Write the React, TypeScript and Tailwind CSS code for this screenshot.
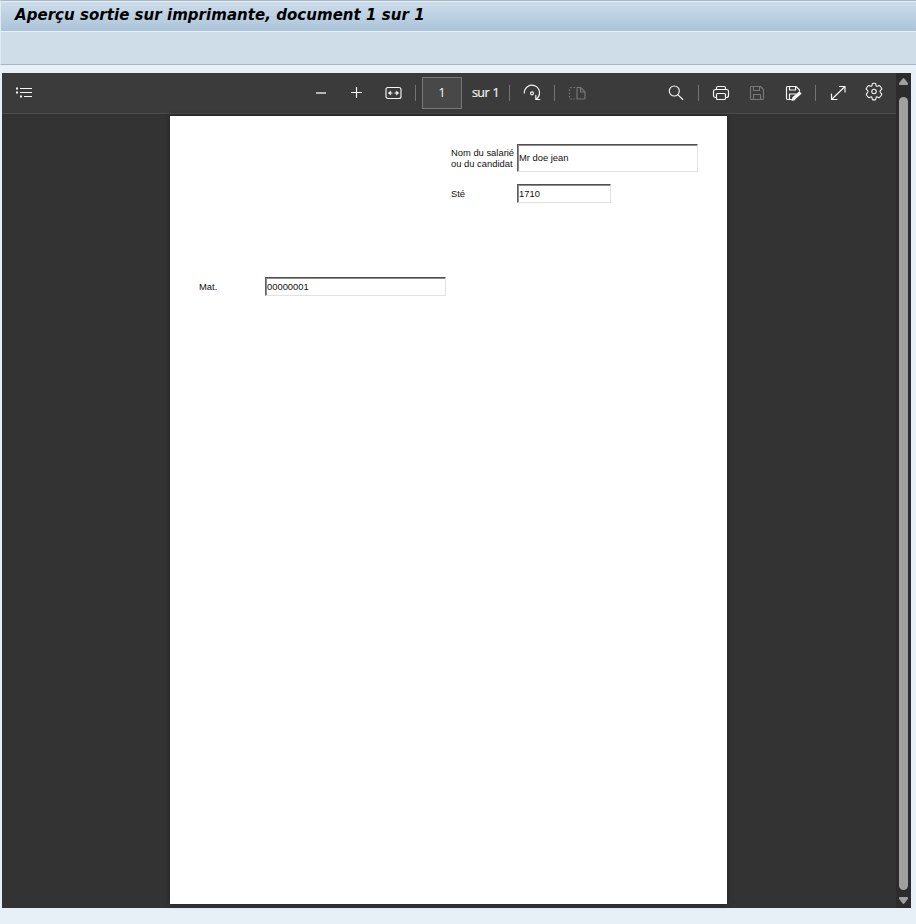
import type { ReactNode } from "react";

function Icon({ className = "", children }: { className?: string; children: ReactNode }) {
  return (
    <svg
      viewBox="0 0 18 18"
      fill="none"
      stroke="currentColor"
      strokeWidth="1.15"
      strokeLinecap="round"
      strokeLinejoin="round"
      className={`size-[18px] shrink-0 ${className}`}
    >
      {children}
    </svg>
  );
}

function Separator({ className = "" }: { className?: string }) {
  return <span className={`h-4 w-px shrink-0 bg-[#747474] ${className}`} />;
}

function Field({ label, value, labelClass, boxClass }: { label: ReactNode; value: string; labelClass: string; boxClass: string }) {
  return (
    <div className="flex items-center">
      <label className={`shrink-0 whitespace-nowrap leading-[11px] ${labelClass}`}>{label}</label>
      <div className={`flex shrink-0 items-center border border-t-[#505050] border-r-[#e2e2e2] border-b-[#e2e2e2] border-l-[#606060] pt-px pl-px shadow-[inset_1px_1px_0_#8c8c8c] ${boxClass}`}>
        {value}
      </div>
    </div>
  );
}

function Toolbar() {
  return (
    <div className="flex h-[41px] items-center border-b border-[#4d4d4d] bg-[#3b3b3b] pb-px text-[#f5f5f5]">
      <Icon className="ml-[13px]">
        <path strokeLinecap="butt" d="M5 4.5h12M5 8.5h12M9 12.5h8" />
        <path strokeLinecap="butt" strokeWidth="2" d="M1 4.5h2M1 8.5h2M5 12.5h2" />
      </Icon>
      <Icon className="ml-[279px] text-[#b5b5b5]">
        <path strokeLinecap="butt" strokeWidth="2" d="M4 9h10" />
      </Icon>
      <Icon className="ml-[18px]">
        <path strokeLinecap="butt" d="M3 8.5h11M8.5 3v11" />
      </Icon>
      <Icon className="ml-[19px]">
        <rect x="1" y="3.5" width="15" height="11" rx="2" />
        <path d="M4 9h3M10 9h3" />
        <path fill="currentColor" strokeWidth=".7" d="M5.3 7.300 3.500 9l1.800 1.700zM11.700 7.300 13.500 9l-1.800 1.700z" />
      </Icon>
      <Separator className="ml-3" />
      <div className="ml-1.5 flex h-8 w-10 shrink-0 items-center justify-center border border-[#777] bg-[#484848] pt-px text-[13px]">1</div>
      <span className="ml-[10px] w-[27px] shrink-0 pt-[2px] whitespace-nowrap text-[12.5px] tracking-[-0.6px] [word-spacing:1px] [-webkit-text-stroke:0.2px]">sur 1</span>
      <Separator className="ml-[10px]" />
      <Icon className="ml-[13px]">
        <path d="M1.300 9a7.600 7.600 0 1 1 12 6" />
        <path d="M12.800 11.300v4.200h4" />
        <circle cx="9" cy="9.300" r="1.500" />
      </Icon>
      <Separator className="ml-[13px]" />
      <Icon className="ml-[13px] text-[#777]">
        <path d="M9 3.500h3.500l4.500 4.500v6a1 1 0 0 1-1 1H9zM12.500 3.500V8H17" />
        <path strokeDasharray="1.800 1.500" strokeLinecap="butt" d="M7 3.500H2.500a1 1 0 0 0-1 1v9.500a1 1 0 0 0 1 1H7" />
      </Icon>
      <Icon className="ml-[81px]">
        <circle cx="7.300" cy="7" r="5" />
        <path d="m11 10.800 4.800 4.700" />
      </Icon>
      <Separator className="ml-[13px]" />
      <Icon className="ml-[13px]">
        <path d="M4.500 13.500H3.500a2 2 0 0 1-2-2V7.500a2 2 0 0 1 2-2h11a2 2 0 0 1 2 2v4a2 2 0 0 1-2 2h-1M4.500 5V4a1.500 1.500 0 0 1 1.500-1.500h6A1.500 1.500 0 0 1 13.500 4v1" />
        <rect x="4.500" y="9.500" width="9" height="6" rx="1" />
      </Icon>
      <Icon className="ml-[18px] text-[#777]">
        <path d="M3.500 2.500h9l3 3v9a1 1 0 0 1-1 1h-11a1 1 0 0 1-1-1v-11a1 1 0 0 1 1-1zM5.500 2.500v4h6v-4M5.500 15.500v-5h7v5" />
      </Icon>
      <Icon className="ml-[19px]">
        <path d="M6.500 15.500H2.500a1 1 0 0 1-1-1V3.500a1 1 0 0 1 1-1h8.500l3.500 3.500v1M4.500 2.500v3.500h6v-3.500M4.500 15.500v-5.500h6.500" />
        <path strokeWidth="3.400" strokeLinecap="butt" d="m8.500 14.500 7-6" />
        <path fill="currentColor" stroke="none" d="m7.500 13-1 4 4-1z" />
      </Icon>
      <Separator className="ml-3" />
      <Icon className="ml-[13px]">
        <path d="M10.500 2.500H16v5.500M16 2.500 2.500 15.500M2.500 10v5.500H8" />
      </Icon>
      <svg viewBox="0 0 20 20" className="ml-[18px] size-[18px] shrink-0 -translate-y-px overflow-visible" fill="none" stroke="currentColor" strokeWidth="1.200" strokeLinejoin="round">
        <path d="M8.200 .5Q10 .1 11.800 .5L12.200 2.800Q12.500 3.800 13.600 3.500L15.900 2.700Q17.900 4.300 18.700 6.700L17.200 8.200Q16 9.500 17.200 10.800L18.700 12.300Q17.900 14.700 15.900 16.300L13.600 15.500Q12.500 15.200 12.200 16.400L11.800 18.500Q10 19 8.200 18.500L7.800 16.400Q7.400 15.200 6.400 15.500L4.100 16.300Q2.100 14.700 1.300 12.300L2.800 10.800Q4 9.500 2.800 8.200L1.300 6.700Q2.100 4.300 4.100 2.700L6.400 3.500Q7.500 3.800 7.800 2.800Z" />
        <circle cx="10" cy="9.500" r="2.500" />
      </svg>
    </div>
  );
}

export default function App() {
  return (
    <main className="flex h-[924px] w-[916px] flex-col overflow-hidden bg-[#e7eff7] font-['Open_Sans','Noto_Sans',sans-serif]">
      <header className="h-[65px] shrink-0 border-t border-b border-l border-t-[#a5b7c7] border-b-[#a5b7c7] border-l-[#e1ebf3] bg-[#cfdde8]">
        <div className="flex h-[31px] items-start border-t border-b border-t-[#e5eef5] border-b-[#e8f1f8] bg-linear-to-b from-[#cddcea] to-[#abc4da] pl-[14px]">
          <h1 className="mt-0.5 whitespace-nowrap font-['DejaVu_Sans',sans-serif] text-[15px] leading-[22px] font-bold tracking-[0.04px] text-black italic">
            Aperçu sortie sur imprimante, document 1 sur 1
          </h1>
        </div>
      </header>
      <section className="mt-2 ml-[2px] flex h-[835px] w-[909px] shrink-0 bg-[#333]">
        <div className="flex w-[894px] flex-col">
          <Toolbar />
          <article className="mt-[2px] ml-[168px] flex h-[788px] w-[557px] shrink-0 flex-col bg-white font-['Liberation_Sans',Arial,sans-serif] text-[9.4px] text-[#111] shadow-[0_0_5px_#222]">
            <div className="mt-7 ml-[281px] flex flex-col gap-3">
              <Field label={<>Nom du salarié<br />ou du candidat</>} value="Mr doe jean" labelClass="w-[66px]" boxClass="h-7 w-[181px]" />
              <Field label="Sté" value="1710" labelClass="w-[66px]" boxClass="h-[19px] w-[94px]" />
            </div>
            <div className="mt-[74px] ml-[29px]">
              <Field label="Mat." value="00000001" labelClass="w-[66px]" boxClass="h-[19px] w-[181px]" />
            </div>
          </article>
        </div>
        <aside className="flex w-[15px] flex-col items-center bg-[#2c2c2c]">
          <svg viewBox="0 0 9 7" className="mt-[5px] h-[7px] w-[9px] fill-[#a0a0a0]"><path d="M3.500.7Q4.500-.5 5.500.7L8.800 5Q9.500 7 8 7H1Q-.5 7 .2 5Z" /></svg>
          <div className="mt-3 h-[793px] w-[9px] rounded-full bg-[#a0a0a0]" />
          <svg viewBox="0 0 9 7" className="mt-[7px] h-[7px] w-[9px] fill-[#a0a0a0]"><path d="M3.500 6.300Q4.500 7.500 5.500 6.300L8.800 2Q9.500 0 8 0H1Q-.5 0 .2 2Z" /></svg>
        </aside>
      </section>
    </main>
  );
}
